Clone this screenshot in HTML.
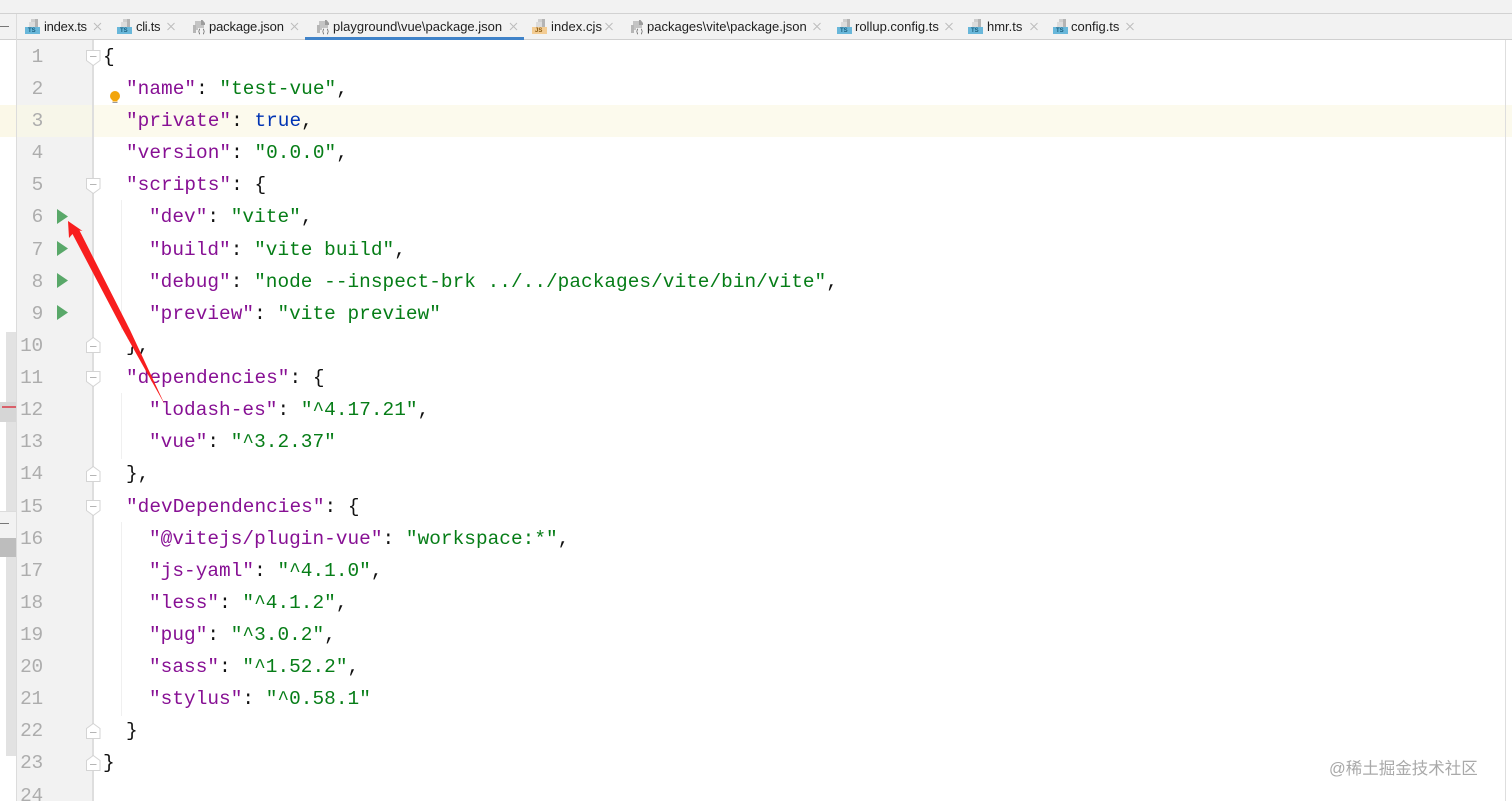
<!DOCTYPE html>
<html><head><meta charset="utf-8">
<style>
html,body{margin:0;padding:0;background:#fff}
#p{position:relative;width:1512px;height:801px;overflow:hidden;background:#fff;font-family:"Liberation Sans",sans-serif}
.a{position:absolute}
.t{position:absolute;top:18px;font-size:13px;line-height:18px;color:#1f1f1f;white-space:nowrap}
.l{position:absolute;font-family:"Liberation Mono",monospace;font-size:19.4px;letter-spacing:.04px;line-height:32px;height:32px;white-space:pre;color:#111}
.n{position:absolute;left:16px;width:27px;text-align:right;font-family:"Liberation Mono",monospace;font-size:19.4px;line-height:32px;color:#adadad;letter-spacing:-.2px}
.k{color:#871094}.s{color:#067d17}.b{color:#0033b3}
.i{position:absolute;font:bold 6px/7px 'Liberation Sans',sans-serif;color:#1b5f7e}
svg{position:absolute;overflow:visible}
</style></head><body><div id="p">
<div class="a" style="left:0;top:0;width:1512px;height:13px;background:#f2f2f2"></div>
<div class="a" style="left:0;top:13px;width:1512px;height:1px;background:#d2d2d2"></div>
<div class="a" style="left:0;top:14px;width:1512px;height:25px;background:#f2f2f2"></div>
<div class="a" style="left:0;top:39px;width:1512px;height:1px;background:#d0d0d0"></div>
<div class="a" style="left:16px;top:14px;width:1px;height:787px;background:#dcdcdc"></div>
<div class="a" style="left:0;top:26px;width:9px;height:1px;background:#777"></div>
<div class="a" style="left:305px;top:37px;width:219px;height:3px;background:#4083c9"></div>

<!-- tab icons -->
<svg style="left:0;top:0" width="1200" height="40">
<defs>
<g id="ts"><rect x="6" y="0" width="4" height="3" fill="#cfcfcf"/><rect x="10" y="0" width="3" height="8" fill="#b4b4b4"/><rect x="4" y="3" width="6" height="5" fill="#dcdcdc"/><rect x="0" y="8" width="15" height="7" fill="#68b7da"/></g>
<g id="js"><rect x="6" y="0" width="4" height="3" fill="#cfcfcf"/><rect x="10" y="0" width="3" height="8" fill="#b4b4b4"/><rect x="4" y="3" width="6" height="5" fill="#dcdcdc"/><rect x="0" y="8" width="15" height="7" fill="#f3cc93"/></g>
<g id="jn"><path d="M3 1H9L12 4V10H3Z" fill="#c4c4c4"/><path d="M9 0H10.500L13 3V5H9Z" fill="#9c9c9c"/><rect x="1" y="5" width="3" height="8" fill="#b6b6b6"/><rect x="6" y="8" width="7" height="7" fill="#f2f2f2"/><path d="M8 9C6.800 9 7.500 11.500 6.500 11.500 7.500 11.500 6.800 14 8 14M11 9C12.200 9 11.500 11.500 12.500 11.500 11.500 11.500 12.200 14 11 14" fill="none" stroke="#666" stroke-width=".8"/></g>
<path id="cl" d="M0 0L7 7M7 0L0 7" stroke="#bdbdbd" stroke-width="1" fill="none"/>
</defs>
<use href="#ts" x="25" y="19"/>
<use href="#ts" x="117" y="19"/>
<use href="#jn" x="192" y="20"/>
<use href="#jn" x="316" y="20"/>
<use href="#js" x="532" y="19"/>
<use href="#jn" x="630" y="20"/>
<use href="#ts" x="837" y="19"/>
<use href="#ts" x="968" y="19"/>
<use href="#ts" x="1053" y="19"/>
<use href="#cl" x="94" y="23"/>
<use href="#cl" x="167.500" y="23"/>
<use href="#cl" x="291" y="23"/>
<use href="#cl" x="510" y="23"/>
<use href="#cl" x="605.500" y="23"/>
<use href="#cl" x="813.500" y="23"/>
<use href="#cl" x="945.500" y="23"/>
<use href="#cl" x="1030.500" y="23"/>
<use href="#cl" x="1126.500" y="23"/>
</svg>
<div class="i" style="left:28px;top:28px">TS</div>
<div class="i" style="left:120px;top:28px">TS</div>
<div class="i" style="left:535px;top:28px;color:#8a5a10">JS</div>
<div class="i" style="left:840px;top:28px">TS</div>
<div class="i" style="left:971px;top:28px">TS</div>
<div class="i" style="left:1056px;top:28px">TS</div>

<div class="t" style="left:44px;letter-spacing:-.25px">index.ts</div>
<div class="t" style="left:136px;letter-spacing:-.3px">cli.ts</div>
<div class="t" style="left:209px;letter-spacing:-.15px">package.json</div>
<div class="t" style="left:333px">playground\vue\package.json</div>
<div class="t" style="left:551px;letter-spacing:.05px">index.cjs</div>
<div class="t" style="left:647px">packages\vite\package.json</div>
<div class="t" style="left:855px">rollup.config.ts</div>
<div class="t" style="left:987px">hmr.ts</div>
<div class="t" style="left:1071px">config.ts</div>

<!-- gutter -->
<div class="a" style="left:17px;top:40px;width:76px;height:761px;background:#f2f2f2"></div>
<div class="a" style="left:92px;top:40px;width:2px;height:761px;background:#dedede"></div>
<!-- caret line -->
<div class="a" style="left:0;top:105px;width:16px;height:32px;background:#fbf8e8"></div>
<div class="a" style="left:17px;top:105px;width:75px;height:32px;background:#f7f6e9"></div>
<div class="a" style="left:94px;top:105px;width:1418px;height:32px;background:#fcfaed"></div>
<!-- right margin -->
<div class="a" style="left:1505px;top:40px;width:1px;height:761px;background:#dedede"></div>
<!-- left scrollbar strip -->
<div class="a" style="left:6px;top:332px;width:10px;height:424px;background:#e2e2e2"></div>
<div class="a" style="left:0;top:402px;width:16px;height:20px;background:#d6d6d6"></div>
<div class="a" style="left:2px;top:406px;width:14px;height:1.5px;background:#d9606a"></div>
<div class="a" style="left:0;top:511px;width:16px;height:1px;background:#dcdcdc;"></div>
<div class="a" style="left:0;top:512px;width:16px;height:26px;background:#f2f2f2"></div>
<div class="a" style="left:0;top:523px;width:9px;height:1px;background:#777"></div>
<div class="a" style="left:0;top:538px;width:16px;height:19px;background:#bdbdbd"></div>

<!-- line numbers -->
<div class="n" style="top:41px">1</div>
<div class="n" style="top:73px">2</div>
<div class="n" style="top:105px">3</div>
<div class="n" style="top:137px">4</div>
<div class="n" style="top:169px">5</div>
<div class="n" style="top:201px">6</div>
<div class="n" style="top:234px">7</div>
<div class="n" style="top:266px">8</div>
<div class="n" style="top:298px">9</div>
<div class="n" style="top:330px">10</div>
<div class="n" style="top:362px">11</div>
<div class="n" style="top:394px">12</div>
<div class="n" style="top:426px">13</div>
<div class="n" style="top:458px">14</div>
<div class="n" style="top:491px">15</div>
<div class="n" style="top:523px">16</div>
<div class="n" style="top:555px">17</div>
<div class="n" style="top:587px">18</div>
<div class="n" style="top:619px">19</div>
<div class="n" style="top:651px">20</div>
<div class="n" style="top:683px">21</div>
<div class="n" style="top:715px">22</div>
<div class="n" style="top:747px">23</div>
<div class="n" style="top:780px">24</div>

<!-- indent guides -->
<div class="a" style="left:121px;top:200px;width:1px;height:130px;background:#f0f0f0"></div>
<div class="a" style="left:121px;top:393px;width:1px;height:66px;background:#f0f0f0"></div>
<div class="a" style="left:121px;top:522px;width:1px;height:194px;background:#f0f0f0"></div>

<!-- code -->
<div class="l" style="left:103px;top:41px">{</div>
<div class="l" style="left:126px;top:73px"><span class="k">"name"</span>: <span class="s">"test-vue"</span>,</div>
<div class="l" style="left:126px;top:105px"><span class="k">"private"</span>: <span class="b">true</span>,</div>
<div class="l" style="left:126px;top:137px"><span class="k">"version"</span>: <span class="s">"0.0.0"</span>,</div>
<div class="l" style="left:126px;top:169px"><span class="k">"scripts"</span>: {</div>
<div class="l" style="left:149px;top:201px"><span class="k">"dev"</span>: <span class="s">"vite"</span>,</div>
<div class="l" style="left:149px;top:234px"><span class="k">"build"</span>: <span class="s">"vite build"</span>,</div>
<div class="l" style="left:149px;top:266px"><span class="k">"debug"</span>: <span class="s">"node --inspect-brk ../../packages/vite/bin/vite"</span>,</div>
<div class="l" style="left:149px;top:298px"><span class="k">"preview"</span>: <span class="s">"vite preview"</span></div>
<div class="l" style="left:126px;top:330px">},</div>
<div class="l" style="left:126px;top:362px"><span class="k">"dependencies"</span>: {</div>
<div class="l" style="left:149px;top:394px"><span class="k">"lodash-es"</span>: <span class="s">"^4.17.21"</span>,</div>
<div class="l" style="left:149px;top:426px"><span class="k">"vue"</span>: <span class="s">"^3.2.37"</span></div>
<div class="l" style="left:126px;top:458px">},</div>
<div class="l" style="left:126px;top:491px"><span class="k">"devDependencies"</span>: {</div>
<div class="l" style="left:149px;top:523px"><span class="k">"@vitejs/plugin-vue"</span>: <span class="s">"workspace:*"</span>,</div>
<div class="l" style="left:149px;top:555px"><span class="k">"js-yaml"</span>: <span class="s">"^4.1.0"</span>,</div>
<div class="l" style="left:149px;top:587px"><span class="k">"less"</span>: <span class="s">"^4.1.2"</span>,</div>
<div class="l" style="left:149px;top:619px"><span class="k">"pug"</span>: <span class="s">"^3.0.2"</span>,</div>
<div class="l" style="left:149px;top:651px"><span class="k">"sass"</span>: <span class="s">"^1.52.2"</span>,</div>
<div class="l" style="left:149px;top:683px"><span class="k">"stylus"</span>: <span class="s">"^0.58.1"</span></div>
<div class="l" style="left:126px;top:715px">}</div>
<div class="l" style="left:103px;top:747px">}</div>

<!-- gutter icons -->
<svg style="left:0;top:0" width="1512" height="801">
<defs>
<g id="fo"><path d="M.5.5H14V10.500L7.250 15.500.5 10.500Z" fill="#fff" stroke="#d4d4d4"/><path d="M4 6.500H10.500" stroke="#b5b5b5"/></g>
<g id="fc"><path d="M.5 15.500H14V5.500L7.250.5.5 5.500Z" fill="#fff" stroke="#d4d4d4"/><path d="M4 9.500H10.500" stroke="#b5b5b5"/></g>
</defs>
<use href="#fo" x="86" y="50"/>
<use href="#fo" x="86" y="178"/>
<use href="#fc" x="86" y="337"/>
<use href="#fo" x="86" y="371"/>
<use href="#fc" x="86" y="466"/>
<use href="#fo" x="86" y="500"/>
<use href="#fc" x="86" y="723"/>
<use href="#fc" x="86" y="755"/>
<g fill="#59a869">
<path d="M57 209L68 216.500 57 224Z"/>
<path d="M57 241L68 248.500 57 256Z"/>
<path d="M57 273L68 280.500 57 288Z"/>
<path d="M57 305L68 312.500 57 320Z"/>
</g>
<!-- bulb -->
<circle cx="115" cy="96" r="5" fill="#f2a50c"/>
<rect x="112.500" y="100" width="5" height="1.500" fill="#f2a50c"/>
<rect x="112.500" y="102" width="5" height="1" fill="#999"/>
<!-- arrow -->
<path d="M68 221L82.500 231 79.500 230.500 130 330 165 405 123 330 72.500 234 69 238Z" fill="#f81e1e"/>
</svg>
<div class="a" style="left:1329px;top:758px;font:16.500px/22px 'Liberation Sans','Noto Sans CJK SC',sans-serif;color:#a9a9a9;white-space:nowrap">@稀土掘金技术社区</div>
</div></body></html>
